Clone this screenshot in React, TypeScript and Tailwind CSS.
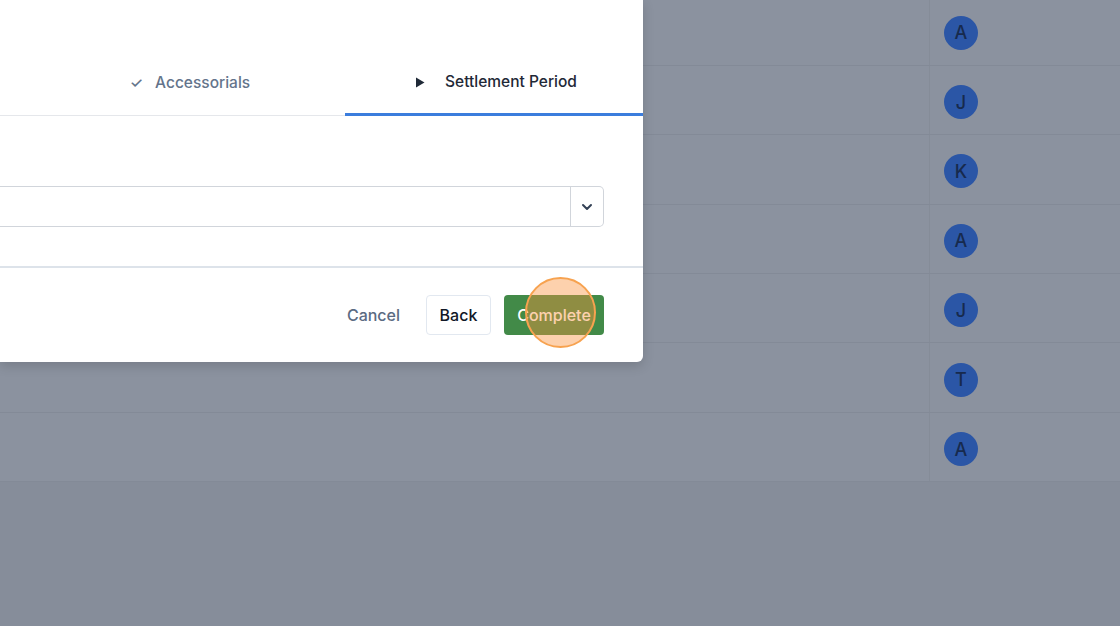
import React from "react";

const rows = ["A", "J", "K", "A", "J", "T", "A"];

const Avatar = ({ letter }: { letter: string }) => (
  <div className="flex h-[34px] w-[34px] items-center justify-center rounded-full bg-[#2b56a6] text-[18px] font-medium text-[#172a4d]">
    {letter}
  </div>
);

const TableBehind = () => (
  <div className="-mt-[3.5px] flex flex-col">
    {rows.map((l, i) => (
      <div
        key={i}
        className="flex h-[69.4px] border-b border-[#838a97] bg-[#8b929f]"
      >
        <div className="w-[930px] border-r border-[#858c98]" />
        <div className="flex flex-1 items-center pl-[14px] pt-[4px]">
          <Avatar letter={l} />
        </div>
      </div>
    ))}
  </div>
);

const Tabs = () => (
  <div className="flex h-[116px] items-end border-b border-[#e5e7eb]">
    <div className="w-[47px]" />
    <div className="flex h-[67px] w-[298px] items-center justify-center gap-[12px] pr-[12px] pt-[3px] text-[15.5px] font-medium text-[#64748b]">
      <span className="text-[15px]">✓</span>
      <span>Accessorials</span>
    </div>
    <div className="-mb-px flex h-[68px] w-[298px] items-center justify-center gap-[20px] border-b-[3px] border-[#3b7ddd] pl-[4px] pt-[3px] text-[15.5px] font-medium text-[#1f2937]">
      <svg width="10" height="11" viewBox="0 0 10 11">
        <path d="M1 0.5 L9.5 5.5 L1 10.5 Z" fill="#1f2937" />
      </svg>
      <span>Settlement Period</span>
    </div>
  </div>
);

const SelectBox = () => (
  <div className="mr-[39px] mt-[70px] flex h-[41px] rounded-r-[5px] border border-l-0 border-[#d1d5db]">
    <div className="flex-1" />
    <div className="flex w-[33px] items-center justify-center border-l border-[#d1d5db]">
      <svg width="12" height="8" viewBox="0 0 12 8" fill="none">
        <path d="M2 2 L6 6 L10 2" stroke="#334155" strokeWidth="2" strokeLinecap="round" strokeLinejoin="round" />
      </svg>
    </div>
  </div>
);

const Footer = () => (
  <div className="mt-[39px] border-t-2 border-[#dde3ea] pt-[27px]">
    <div className="mr-[39px] flex items-center justify-end">
      <button className="mr-[26px] text-[16px] font-medium text-[#5b6b82]">Cancel</button>
      <button className="mr-[13px] h-[40px] w-[65px] rounded-[4px] border border-[#e2e8f0] bg-white text-[16px] font-medium text-[#111827]">
        Back
      </button>
      <div className="relative">
        <button className="h-[40px] w-[100px] rounded-[4px] bg-[#428a48] text-[16px] font-medium text-white">
          Complete
        </button>
        <div className="absolute left-[21px] top-[-18px] h-[71px] w-[71px] rounded-full border-2 border-[#f7a24f] bg-[rgba(251,146,60,0.42)]" />
      </div>
    </div>
  </div>
);

export default function App() {
  return (
    <div
      className="relative h-[626px] w-[1120px] overflow-hidden bg-[#868d9a]"
      style={{ fontFamily: "Inter, 'Noto Sans', sans-serif" }}
    >
      <TableBehind />
      <div className="absolute left-0 top-0 h-[362px] w-[643px] rounded-br-[6px] bg-white shadow-[0_4px_12px_rgba(0,0,0,0.15)]">
        <Tabs />
        <SelectBox />
        <Footer />
      </div>
    </div>
  );
}
